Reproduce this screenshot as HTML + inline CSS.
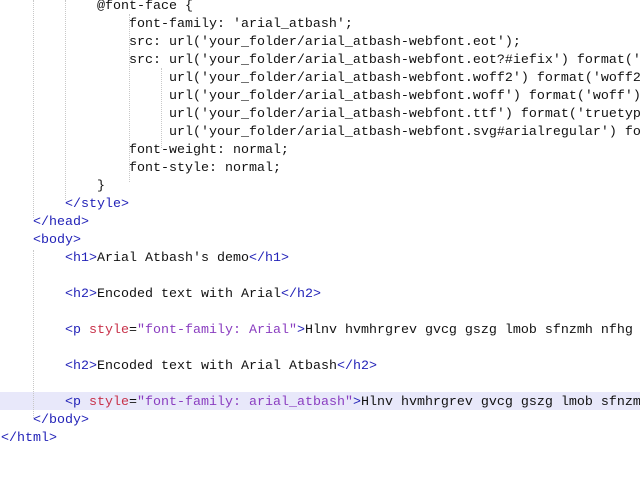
<!DOCTYPE html>
<html><head><style>
body{margin:0;width:640px;height:480px;background:#fff;overflow:hidden;position:relative}
pre{margin:0;position:absolute;left:1px;top:-2px;width:639px;height:482px;overflow:hidden;font-family:"Liberation Mono",monospace;font-size:13.33px;line-height:18px;color:#111;white-space:pre}
.t{color:#2323b8}.a{color:#c8324a}.v{color:#8a3dc0}
.hl{position:absolute;left:0;top:392px;width:640px;height:18px;background:#e8e8fa}
.g{position:absolute;width:0;border-left:1px dotted #c8c8c8}
</style></head><body>
<div class="hl"></div>
<div class="g" style="left:33px;top:0;height:218px"></div>
<div class="g" style="left:65px;top:0;height:200px"></div>
<div class="g" style="left:33px;top:250px;height:168px"></div>
<div class="g" style="left:129px;top:14px;height:168px"></div>
<div class="g" style="left:161px;top:68px;height:80px"></div>
<pre>            @font-face {
                font-family: 'arial_atbash';
                src: url('your_folder/arial_atbash-webfont.eot');
                src: url('your_folder/arial_atbash-webfont.eot?#iefix') format('
                     url('your_folder/arial_atbash-webfont.woff2') format('woff2
                     url('your_folder/arial_atbash-webfont.woff') format('woff')
                     url('your_folder/arial_atbash-webfont.ttf') format('truetyp
                     url('your_folder/arial_atbash-webfont.svg#arialregular') fo
                font-weight: normal;
                font-style: normal;
            }
        <span class="t">&lt;/style&gt;</span>
    <span class="t">&lt;/head&gt;</span>
    <span class="t">&lt;body&gt;</span>
        <span class="t">&lt;h1&gt;</span>Arial Atbash's demo<span class="t">&lt;/h1&gt;</span>

        <span class="t">&lt;h2&gt;</span>Encoded text with Arial<span class="t">&lt;/h2&gt;</span>

        <span class="t">&lt;p</span> <span class="a">style</span>=<span class="v">"font-family: Arial"</span><span class="t">&gt;</span>Hlnv hvmhrgrev gvcg gszg lmob sfnzmh nfhg 

        <span class="t">&lt;h2&gt;</span>Encoded text with Arial Atbash<span class="t">&lt;/h2&gt;</span>

        <span class="t">&lt;p</span> <span class="a">style</span>=<span class="v">"font-family: arial_atbash"</span><span class="t">&gt;</span>Hlnv hvmhrgrev gvcg gszg lmob sfnzm
    <span class="t">&lt;/body&gt;</span>
<span class="t">&lt;/html&gt;</span></pre>
</body></html>
